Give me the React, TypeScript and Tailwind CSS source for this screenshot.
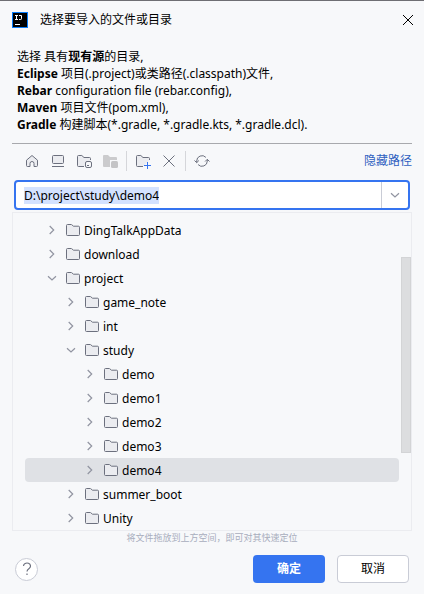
import { useState, type ReactNode } from "react";

type Node = { name: string; level: 0 | 1 | 2; open?: boolean };

const NODES: Node[] = [
  { name: "DingTalkAppData", level: 0 },
  { name: "download", level: 0 },
  { name: "project", level: 0, open: true },
  { name: "game_note", level: 1 },
  { name: "int", level: 1 },
  { name: "study", level: 1, open: true },
  { name: "demo", level: 2 },
  { name: "demo1", level: 2 },
  { name: "demo2", level: 2 },
  { name: "demo3", level: 2 },
  { name: "demo4", level: 2 },
  { name: "summer_boot", level: 1 },
  { name: "Unity", level: 1 },
];

const INDENT = { 0: "pl-[19px]", 1: "pl-[38px]", 2: "pl-[57px]" };

function Icon({ children }: { children: ReactNode }) {
  return (
    <svg width="16" height="16" viewBox="0 0 16 16" fill="none" stroke="#6c707e" className="block shrink-0" aria-hidden="true">
      {children}
    </svg>
  );
}

function Chevron({ open }: { open?: boolean }) {
  return (
    <svg width="16" height="16" viewBox="0 0 16 16" fill="none" stroke="#9194a1" strokeWidth="1.2" className="block shrink-0" aria-hidden="true">
      <path d={open ? "M4 6.2l4 3.800 4-3.800" : "M5.700 4l4 4-4 4"} />
    </svg>
  );
}

function Folder() {
  return (
    <Icon>
      <path
        d="M1.5 3.5a1 1 0 0 1 1-1h3.6a1 1 0 0 1 .6.2L8.5 4.2h5a1 1 0 0 1 1 1v7.3a1 1 0 0 1-1 1h-11a1 1 0 0 1-1-1z"
        fill="#ebecf0"
      />
    </Icon>
  );
}

function Tool({ label, disabled, children }: { label: string; disabled?: boolean; children: ReactNode }) {
  return (
    <button type="button" aria-label={label} disabled={disabled} className="flex h-[26px] w-[26px] items-center justify-center">
      <Icon>{children}</Icon>
    </button>
  );
}

export default function App() {
  const [path, setPath] = useState("D:\\project\\study\\demo4");
  const [selected, setSelected] = useState("demo4");

  return (
    <main className="flex min-h-screen flex-col border-t border-[#6e6e73] bg-[#f7f8fa] px-3 font-['Noto_Sans','Noto_Sans_CJK_SC',sans-serif] text-xs text-black">
      <header className="flex h-[38px] items-center">
        <svg width="16" height="16" viewBox="0 0 16 16" className="block" aria-hidden="true">
          <rect width="16" height="16" fill="#087cfa" />
          <rect x="1" y="1" width="14" height="14" fill="#000" />
          <path d="M3 3.5h3M4.5 3.5v4M3 7.5h3M7 3.5h2.5v3.2q0 .8-.8.8H7M3 12.5h5" stroke="#fff" fill="none" />
        </svg>
        <h1 className="ml-3 flex-1">选择要导入的文件或目录</h1>
        <button type="button" aria-label="关闭" className="-mr-1 flex h-4 w-4 items-center justify-center">
          <svg width="12" height="12" viewBox="0 0 12 12" stroke="#000" className="block" aria-hidden="true">
            <path d="M1 1l10 10M11 1L1 11" />
          </svg>
        </button>
      </header>

      <p className="mt-[9px] px-[5px] leading-[17px]">
        选择 具有<b>现有源</b>的目录,
        <br />
        <b>Eclipse</b> 项目(.project)或类路径(.classpath)文件,
        <br />
        <b>Rebar</b> configuration file (rebar.config),
        <br />
        <b>Maven</b> 项目文件(pom.xml),
        <br />
        <b>Gradle</b> 构建脚本(*.gradle, *.gradle.kts, *.gradle.dcl).
      </p>

      <div className="mt-[10px] mb-[2px] flex h-[35px] items-center border-t border-[#a8a9ad] pl-[7px]">
        <Tool label="主目录">
          <path d="M2.5 7.2L8 2.5l5.500 4.700v5.300a1 1 0 0 1-1 1h-2.500v-3a2 2 0 0 0-4 0v3H3.500a1 1 0 0 1-1-1z" fill="#ebecf0" strokeLinejoin="round" />
        </Tool>
        <Tool label="桌面">
          <rect x="2.500" y="2.500" width="11" height="8" rx="1" fill="#ebecf0" />
          <path d="M2 13.500h12" />
        </Tool>
        <Tool label="项目目录">
          <path d="M8 13.500H2.500a1 1 0 0 1-1-1v-9a1 1 0 0 1 1-1h3.300L8 4.500h5.500a1 1 0 0 1 1 1V7" fill="#ebecf0" />
          <rect x="9.500" y="8.500" width="6" height="6" rx="1.500" fill="#f7f8fa" />
          <path d="M11 12.500h2" />
        </Tool>
        <Tool label="模块目录" disabled>
          <path d="M1 3a1 1 0 0 1 1-1h4l2 2h6a1 1 0 0 1 1 1v2H8v7H2a1 1 0 0 1-1-1z" fill="#cbcbcd" stroke="none" />
          <rect x="9" y="8" width="7" height="7" rx="1.500" fill="#c4c4c6" stroke="none" />
        </Tool>
        <span className="mx-[3px] h-5 w-px bg-[#d5d6da]" />
        <Tool label="新建文件夹">
          <path d="M8 13.500H2.500a1 1 0 0 1-1-1v-9a1 1 0 0 1 1-1h3.300L8 4.500h5.500a1 1 0 0 1 1 1V7" fill="#ebecf0" />
          <path d="M12.500 9v7M9 12.500h7" stroke="#3574f0" />
        </Tool>
        <Tool label="删除">
          <path d="M2.500 2.500l11 11M13.500 2.500l-11 11" />
        </Tool>
        <span className="mx-[3px] h-5 w-px bg-[#d5d6da]" />
        <Tool label="刷新">
          <path d="M2.700 9.500V8a5.300 5.300 0 0 1 9.200-3.600M13.300 6.500V8a5.300 5.300 0 0 1-9.200 3.600M.5 7.500l2.200 2.200 2.200-2.200M11.100 8.500l2.200-2.200 2.200 2.200" />
        </Tool>
        <a href="#path" className="ml-auto text-[#2e5fc0]">
          隐藏路径
        </a>
      </div>

      <div className="mx-[2px] flex h-[30px] rounded border-2 border-[#3574f0] bg-white">
        <label className="flex min-w-0 flex-1 items-center pl-2">
          <input
            id="path"
            aria-label="路径"
            value={path}
            onChange={(e) => setPath(e.target.value)}
            className="field-sizing-content h-[17px] bg-[#d4e2ff] outline-none"
          />
        </label>
        <button type="button" aria-label="历史记录" className="flex w-[27px] items-center justify-center border-l border-[#c9ccd6]">
          <Chevron open />
        </button>
      </div>

      <section className="mt-[2px] flex border border-[#ebecf0]">
        <ul role="tree" className="flex-1 pt-[5px] pr-[2px] pl-3">
          {NODES.map((n) => (
            <li key={n.name} role="treeitem" aria-expanded={!!n.open} aria-selected={n.name === selected}>
              <button
                type="button"
                onClick={() => setSelected(n.name)}
                className={`flex h-6 w-full items-center rounded ${INDENT[n.level]} ${n.name === selected ? "bg-[#dfe1e5]" : ""}`}
              >
                <Chevron open={n.open} />
                <span className="ml-[5px]">
                  <Folder />
                </span>
                <span className="ml-[3px] pt-px">{n.name}</span>
              </button>
            </li>
          ))}
        </ul>
        <div className="w-[10px] pt-11">
          <div className="h-49 border border-[#d3d4d6] bg-[#dcdddf]" />
        </div>
      </section>

      <p className="text-center text-[9px] leading-[14px] text-[#a8adbd]">将文件拖放到上方空间，即可对其快速定位</p>

      <footer className="mt-[10px] flex items-center gap-3 px-[3px] pb-[11px]">
        <button type="button" aria-label="帮助" className="mr-auto flex h-[23px] w-[23px] items-center justify-center rounded-full border border-[#c9ccd6] bg-white">
          <Icon>
            <path d="M4.500 5a3.500 3 0 1 1 5.800 2.300C9 8.200 8 8.800 8 10.500M8 12.500v1.500" strokeWidth="1.200" />
          </Icon>
        </button>
        <button type="button" className="h-7 w-[72px] rounded bg-[#3574f0] font-bold text-white">
          确定
        </button>
        <button type="button" className="h-7 w-[72px] rounded border border-[#c9ccd6] bg-white">
          取消
        </button>
      </footer>
    </main>
  );
}
